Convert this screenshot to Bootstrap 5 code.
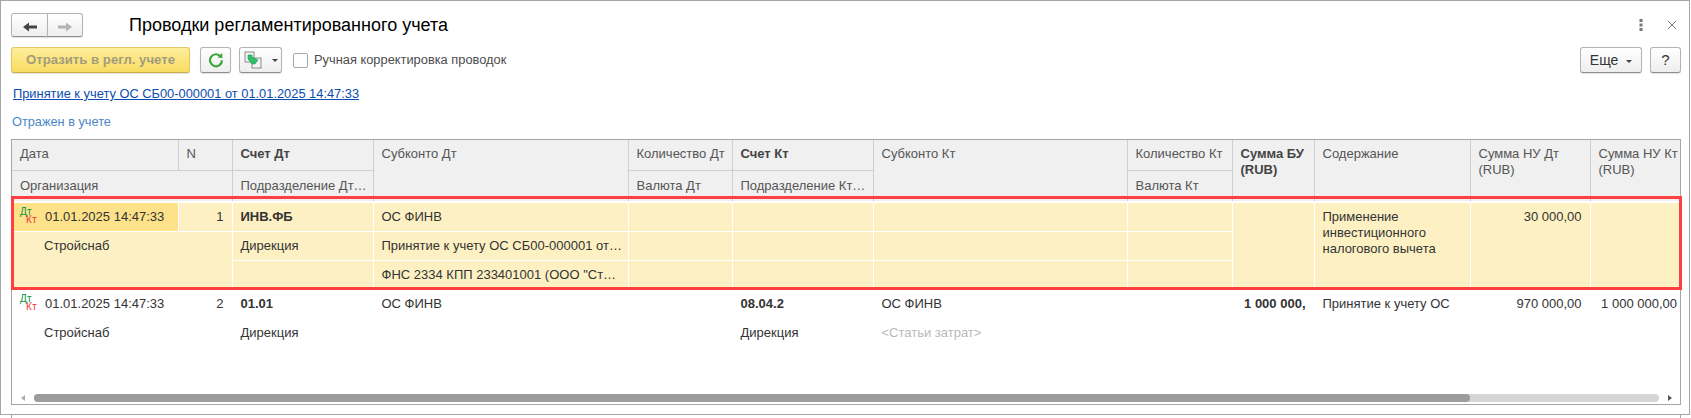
<!DOCTYPE html>
<html lang="ru">
<head>
    <meta charset="UTF-8">
    <meta name="viewport" content="width=device-width, initial-scale=1.0">
    <title>Проводки регламентированного учета</title>
    <link href="https://cdn.jsdelivr.net/npm/bootstrap@5.3.3/dist/css/bootstrap.min.css" rel="stylesheet">
    <style>
        body{
            background-color: #fff;
            color: #333;
            font-family: "Liberation Sans", Arial, sans-serif;
            font-size: 13px;
            overflow: hidden;
        }
        .win-frame{
            width: 1690px;
            height: 415px;
            border: 1px solid #a6a6a6;
            padding: 12px 8px 0 10px;
        }
        .win-stubs{
            height: 3px;
            width: 1670px;
            margin-left: 11px;
            border-left: 1px solid #a6a6a6;
            border-right: 1px solid #a6a6a6;
        }
        .win-title{
            font-size: 18px;
            line-height: 24px;
            color: #000;
            margin-left: 46px;
        }
        .win-actions{
            gap: 24px;
            margin-right: 4px;
        }
        .tool-row{
            margin-top: 10px;
        }
        .tool-btn{
            height: 26px;
            padding: 0;
            font-size: 13px;
            line-height: 24px;
            color: #333;
            background: linear-gradient(#fff, #eee);
            border: 1px solid #b4b4b4;
            border-bottom-color: #8f8f8f;
            border-radius: 3px;
            box-shadow: 0 1px 1px rgba(0,0,0,.12);
        }
        .nav-btn{
            width: 37px;
            height: 24px;
        }
        .nav-btn + .nav-btn{
            width: 36px;
        }
        .post-btn{
            width: 179px;
            font-weight: bold;
            font-size: 13.2px;
            color: #a39c7c;
            background: linear-gradient(#ffee9c, #f8dc62);
            border-color: #e0c762;
            border-bottom-color: #c9ae48;
        }
        .refresh-btn{
            width: 31px;
            margin-left: 10px;
        }
        .copy-btn{
            width: 43px;
            margin-left: 8px;
        }
        .more-btn{
            width: 62px;
            font-size: 14px;
        }
        .help-btn{
            width: 31px;
            margin-left: 8px;
            font-size: 15px;
        }
        .tool-caret{
            display: inline-block;
            border-top: 3px solid #444;
            border-left: 3px solid transparent;
            border-right: 3px solid transparent;
            vertical-align: middle;
        }
        .manual-check{
            width: 15px;
            height: 15px;
            border: 1px solid #a8a8a8;
            border-radius: 2px;
            background: #fff;
            margin-left: 11px;
        }
        .manual-label{
            margin-left: 6px;
            color: #4d4d4d;
            font-size: 12.85px;
        }
        .doc-link{
            color: #0b4db0;
            font-size: 12.85px;
            line-height: 16px;
            margin: 13px 0 0 2px;
        }
        .doc-state{
            color: #4c87c5;
            font-size: 12.75px;
            line-height: 16px;
            margin: 12px 0 0 1px;
        }
        .grid-frame{
            position: relative;
            width: 1670px;
            height: 266px;
            margin: 9px 0 0 0;
            border: 1px solid #a6a6a6;
        }
        .table.reg-grid{
            table-layout: fixed;
            width: 1668px;
            margin: 0;
            border-collapse: collapse;
            font-size: 13px;
            line-height: 16px;
            border-bottom: 1px solid #dedede;
        }
        .reg-grid col:nth-child(1){ width: 166px; }
        .reg-grid col:nth-child(2){ width: 54px; }
        .reg-grid col:nth-child(3){ width: 141px; }
        .reg-grid col:nth-child(4){ width: 255px; }
        .reg-grid col:nth-child(5){ width: 104px; }
        .reg-grid col:nth-child(6){ width: 141px; }
        .reg-grid col:nth-child(7){ width: 254px; }
        .reg-grid col:nth-child(8){ width: 105px; }
        .reg-grid col:nth-child(9){ width: 82px; }
        .reg-grid col:nth-child(10){ width: 156px; }
        .reg-grid col:nth-child(11){ width: 120px; }
        .reg-grid col:nth-child(12){ width: 90px; }
        .table.reg-grid th,
        .table.reg-grid td{
            padding: 6px 8px 0;
            vertical-align: top;
            white-space: nowrap;
            overflow: hidden;
            border: 1px solid #fff;
            box-shadow: none;
            color: #333;
            background-color: #fff;
        }
        .table.reg-grid th{
            height: 30px;
            padding-right: 2px;
            font-weight: normal;
            color: #555;
            background-color: #f0f0f0;
            border-color: #cfcfcf;
            border-top: 0;
        }
        .table.reg-grid thead tr + tr th{
            height: 32px;
            padding-top: 7px;
        }
        .table.reg-grid th:last-child,
        .table.reg-grid td:last-child{
            border-right: 0;
        }
        .table.reg-grid th:first-child,
        .table.reg-grid td:first-child{
            border-left: 0;
        }
        .table.reg-grid th.wrap-cell,
        .table.reg-grid td.wrap-cell{
            white-space: normal;
        }
        .table.reg-grid th.strong-cell{
            font-weight: bold;
            color: #444;
        }
        .table.reg-grid td{
            height: 29px;
        }
        .table.reg-grid .tail-row td{
            height: 26px;
        }
        .table.reg-grid thead{
            border-bottom: 1px solid #cfcfcf;
        }
        .table.reg-grid tbody tr:first-child td{
            border-top: 2px solid #fff;
        }
        .table.reg-grid .sel-row td{
            background-color: #fdf1c3;
        }
        .table.reg-grid .sel-row td.cur-cell{
            background-color: #fde28a;
        }
        .table.reg-grid td.org-cell{
            padding-left: 32px;
        }
        .table.reg-grid td.hint-cell{
            color: #b9b9b9;
        }
        .table.reg-grid td.edge-cell{
            padding: 6px 3px 0 0;
        }
        .dk-mark{
            display: inline-block;
            width: 25px;
            font-size: 10px;
            line-height: 8px;
            vertical-align: top;
            margin-top: -1px;
            letter-spacing: .3px;
        }
        .dk-mark span{
            display: block;
        }
        .dk-mark .dk-d{
            color: #0b9444;
        }
        .dk-mark .dk-k{
            color: #ee3b3b;
            margin-left: 6px;
        }
        .reg-mark{
            position: absolute;
            left: -1px;
            top: 56px;
            width: 1671px;
            height: 94px;
            border: 3px solid #ff4040;
            pointer-events: none;
        }
        .grid-scroll{
            height: 13px;
            padding: 0 8px 0 9px;
        }
        .scroll-arrow{
            width: 0;
            height: 0;
            border-top: 3px solid transparent;
            border-bottom: 3px solid transparent;
        }
        .arrow-left{
            border-right: 4px solid #aaa;
        }
        .arrow-right{
            border-left: 4px solid #555;
        }
        .scroll-track{
            height: 8px;
            border-radius: 4px;
            background: #d5d5d5;
            margin: 0 9px 0 9px;
        }
        .scroll-thumb{
            width: 1436px;
            height: 8px;
            border-radius: 4px;
            background: #9c9c9c;
        }
    </style>
</head>
<body>
    <div class="win-frame">
        <div class="d-flex align-items-center">
            <div class="btn-group">
                <button type="button" class="btn tool-btn nav-btn">
                    <svg width="16" height="12" viewBox="0 0 16 12"><path d="M1 6 L7 1.5 V4.5 H15 V7.5 H7 V10.5 Z" fill="#444"/></svg>
                </button>
                <button type="button" class="btn tool-btn nav-btn">
                    <svg width="16" height="12" viewBox="0 0 16 12"><path d="M15 6 L9 1.5 V4.5 H1 V7.5 H9 V10.5 Z" fill="#b5b5b5"/></svg>
                </button>
            </div>
            <div class="win-title">Проводки регламентированного учета</div>
            <div class="ms-auto d-flex align-items-center win-actions">
                <svg width="4" height="12" viewBox="0 0 4 12"><g fill="#777"><rect x="0.5" y="0" width="3" height="3"/><rect x="0.5" y="4.5" width="3" height="3"/><rect x="0.5" y="9" width="3" height="3"/></g></svg>
                <svg width="10" height="10" viewBox="0 0 10 10"><path d="M1 1 L9 9 M9 1 L1 9" stroke="#777" stroke-width="1"/></svg>
            </div>
        </div>
        <div class="d-flex align-items-center tool-row">
            <button type="button" class="btn tool-btn post-btn">Отразить в регл. учете</button>
            <button type="button" class="btn tool-btn refresh-btn d-flex align-items-center justify-content-center">
                <svg width="16" height="16" viewBox="0 0 16 16"><path d="M12.6 4.4 A6 6 0 1 0 14 8.4" fill="none" stroke="#3ca63c" stroke-width="2.2"/><path d="M9.5 5.6 L14.5 6 L14.2 1 Z" fill="#3ca63c"/></svg>
            </button>
            <button type="button" class="btn tool-btn copy-btn d-flex align-items-center justify-content-center gap-2">
                <svg width="20" height="18" viewBox="0 0 20 18">
                    <rect x="1" y="1" width="9" height="10" fill="#f4f4f4" stroke="#8a8a8a"/>
                    <rect x="8" y="7" width="9" height="10" fill="#f4f4f4" stroke="#8a8a8a"/>
                    <path d="M4 4 L8 4 L8 6 L14 9 L11 13 L8 13 L4 8 Z" fill="#2fbf6a" stroke="#1c9a4c" stroke-width=".6"/>
                </svg>
                <span class="tool-caret"></span>
            </button>
            <span class="manual-check"></span>
            <span class="manual-label">Ручная корректировка проводок</span>
            <button type="button" class="btn tool-btn more-btn ms-auto">Еще <span class="tool-caret ms-1"></span></button>
            <button type="button" class="btn tool-btn help-btn">?</button>
        </div>
        <div class="doc-link"><u>Принятие к учету ОС СБ00-000001 от 01.01.2025 14:47:33</u></div>
        <div class="doc-state">Отражен в учете</div>
        <div class="grid-frame d-flex flex-column">
            <table class="table reg-grid">
                <colgroup>
                    <col><col><col><col><col><col><col><col><col><col><col><col>
                </colgroup>
                <thead>
                    <tr>
                        <th>Дата</th>
                        <th>N</th>
                        <th class="strong-cell">Счет Дт</th>
                        <th rowspan="2">Субконто Дт</th>
                        <th>Количество Дт</th>
                        <th class="strong-cell">Счет Кт</th>
                        <th rowspan="2">Субконто Кт</th>
                        <th>Количество Кт</th>
                        <th rowspan="2" class="strong-cell wrap-cell">Сумма БУ (RUB)</th>
                        <th rowspan="2">Содержание</th>
                        <th rowspan="2" class="wrap-cell">Сумма НУ Дт (RUB)</th>
                        <th rowspan="2" class="wrap-cell">Сумма НУ Кт (RUB)</th>
                    </tr>
                    <tr>
                        <th colspan="2">Организация</th>
                        <th>Подразделение Дт…</th>
                        <th>Валюта Дт</th>
                        <th>Подразделение Кт…</th>
                        <th>Валюта Кт</th>
                    </tr>
                </thead>
                <tbody>
                    <tr class="sel-row">
                        <td class="cur-cell"><span class="dk-mark"><span class="dk-d">Дт</span><span class="dk-k">Кт</span></span>01.01.2025 14:47:33</td>
                        <td class="text-end">1</td>
                        <td class="fw-bold">ИНВ.ФБ</td>
                        <td>ОС ФИНВ</td>
                        <td></td>
                        <td></td>
                        <td></td>
                        <td></td>
                        <td rowspan="3"></td>
                        <td rowspan="3" class="wrap-cell">Применение инвестиционного налогового вычета</td>
                        <td rowspan="3" class="text-end">30 000,00</td>
                        <td rowspan="3"></td>
                    </tr>
                    <tr class="sel-row">
                        <td colspan="2" rowspan="2" class="org-cell">Стройснаб</td>
                        <td>Дирекция</td>
                        <td>Принятие к учету ОС СБ00-000001 от…</td>
                        <td></td>
                        <td></td>
                        <td></td>
                        <td></td>
                    </tr>
                    <tr class="sel-row">
                        <td></td>
                        <td>ФНС 2334 КПП 233401001 (ООО "Ст…</td>
                        <td></td>
                        <td></td>
                        <td></td>
                        <td></td>
                    </tr>
                    <tr>
                        <td><span class="dk-mark"><span class="dk-d">Дт</span><span class="dk-k">Кт</span></span>01.01.2025 14:47:33</td>
                        <td class="text-end">2</td>
                        <td class="fw-bold">01.01</td>
                        <td>ОС ФИНВ</td>
                        <td></td>
                        <td class="fw-bold">08.04.2</td>
                        <td>ОС ФИНВ</td>
                        <td></td>
                        <td rowspan="3" class="fw-bold text-end">1 000 000,</td>
                        <td rowspan="3">Принятие к учету ОС</td>
                        <td rowspan="3" class="text-end">970 000,00</td>
                        <td rowspan="3" class="text-end edge-cell">1 000 000,00</td>
                    </tr>
                    <tr>
                        <td colspan="2" rowspan="2" class="org-cell">Стройснаб</td>
                        <td>Дирекция</td>
                        <td></td>
                        <td></td>
                        <td>Дирекция</td>
                        <td class="hint-cell">&lt;Статьи затрат&gt;</td>
                        <td></td>
                    </tr>
                    <tr class="tail-row">
                        <td></td>
                        <td></td>
                        <td></td>
                        <td></td>
                        <td></td>
                        <td></td>
                    </tr>
                </tbody>
            </table>
            <div class="reg-mark"></div>
            <div class="grid-scroll mt-auto d-flex align-items-center">
                <span class="scroll-arrow arrow-left"></span>
                <div class="scroll-track flex-grow-1"><div class="scroll-thumb"></div></div>
                <span class="scroll-arrow arrow-right"></span>
            </div>
        </div>
    </div>
    <div class="win-stubs"></div>
    <script src="https://cdn.jsdelivr.net/npm/bootstrap@5.3.3/dist/js/bootstrap.bundle.min.js"></script>
</body>
</html>
